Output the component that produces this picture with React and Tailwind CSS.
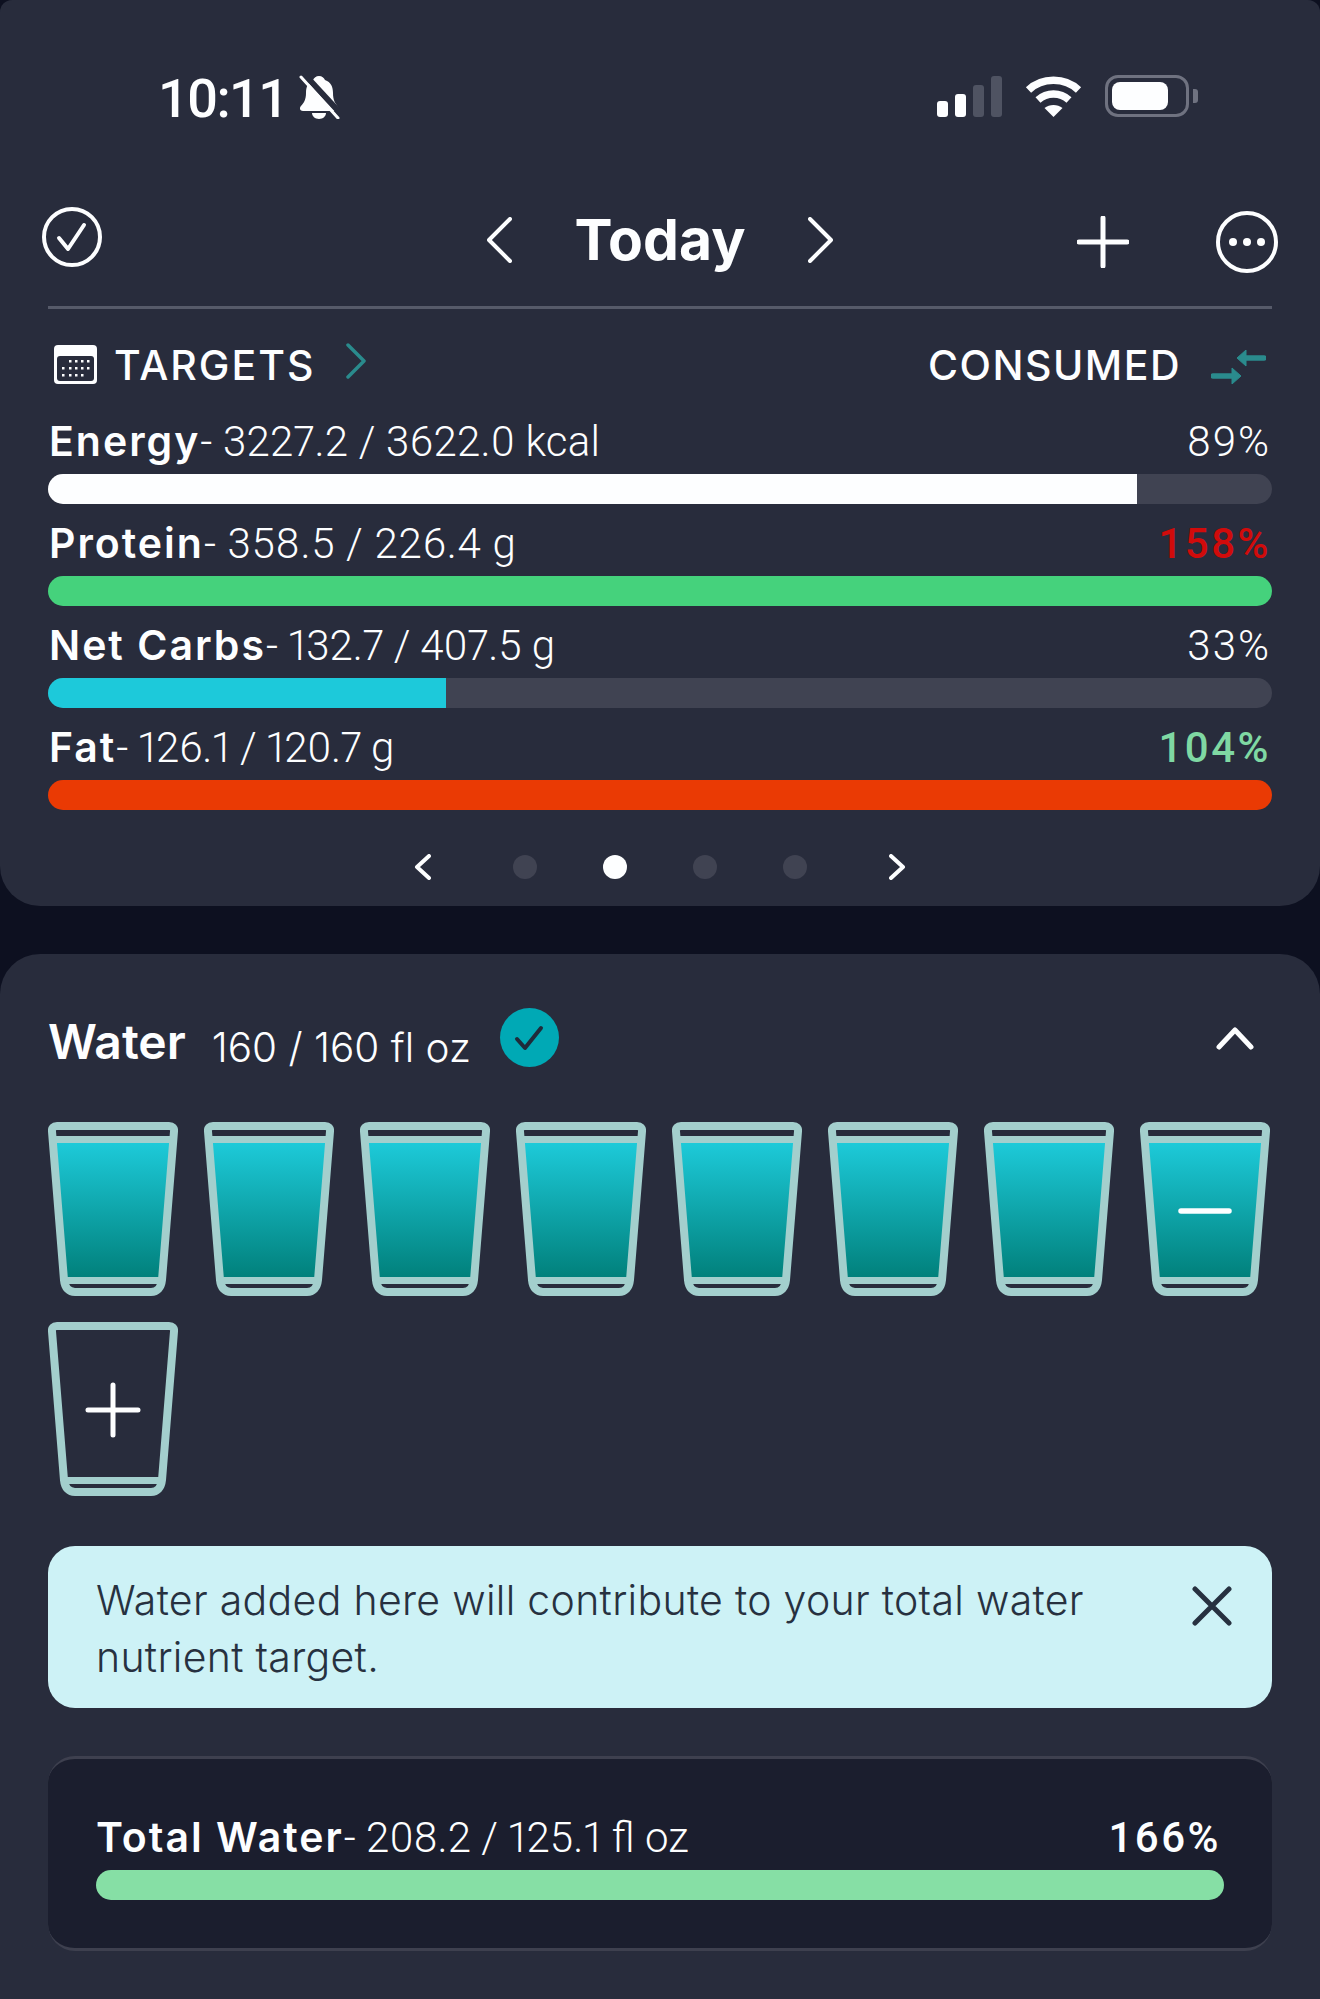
const rows = [
  { name: "Energy", value: "3227.2 / 3622.0 kcal", valueClass: "tracking-[0.2px]", pct: "89%", pctClass: "text-[#fdfeff] font-light tracking-[2px]", fill: "bg-[#fdfeff]", width: "w-[89%]" },
  { name: "Protein", value: "358.5 / 226.4 g", valueClass: "tracking-[0.7px]", pct: "158%", pctClass: "text-[#d10b0b] font-medium tracking-[2.5px]", fill: "bg-[#45d27c]", width: "w-full" },
  { name: "Net Carbs", value: "132.7 / 407.5 g", valueClass: "tracking-[-0.1px]", pct: "33%", pctClass: "text-[#fdfeff] font-light tracking-[2px]", fill: "bg-[#1dc9da]", width: "w-[32.5%]" },
  { name: "Fat", value: "126.1 / 120.7 g", valueClass: "tracking-[-0.35px]", pct: "104%", pctClass: "text-[#7fd8a3] font-medium tracking-[2.5px]", fill: "bg-[#ea3a04]", width: "w-full" },
];

const BellSlash = () => (
  <svg width="41" height="44" viewBox="0 0 41 44">
    <path d="M20 1c3 0 5 2 6 4 6 2 8 7 8 13 0 7 2 10 5 14 1 2 0 4-2 4H4c-3 0-4-3-2-5 3-3 5-7 5-13 0-6 2-11 7-13 1-2 3-4 6-4z" fill="#fdfeff" />
    <path d="M13 38h14c0 3-3 6-7 6s-7-3-7-6z" fill="#fdfeff" />
    <path d="M5 -1l38 41" stroke="#282c3c" strokeWidth="6" />
    <path d="M2 2l37 41" stroke="#fdfeff" strokeWidth="3" strokeLinecap="round" />
  </svg>
);

const Wifi = () => (
  <svg width="57" height="42" viewBox="0 0 57 42" fill="none">
    <path d="M3.500 15C17 2 40 2 53.500 15" stroke="#fdfeff" strokeWidth="7.500" />
    <path d="M13 25c9-8 22-8 31 0" stroke="#fdfeff" strokeWidth="7.500" />
    <path d="M19.500 33c5-4 13-4 18 0l-9 9z" fill="#fdfeff" />
  </svg>
);

const Chevron = ({ dir }) => (
  <svg width="25" height="46" viewBox="0 0 25 46" fill="none">
    <path
      d={dir === "left" ? "M23 2L2 23l21 21" : "M2 2l21 21L2 44"}
      stroke="#fdfeff"
      strokeWidth="4"
      strokeLinecap="round"
      strokeLinejoin="round"
    />
  </svg>
);

const SmallChevron = ({ dir }) => (
  <svg width="17" height="26" viewBox="0 0 17 26" fill="none">
    <path d={dir === "left" ? "M15 2L3 13l12 11" : "M2 2l12 11L2 24"} stroke="#fdfeff" strokeWidth="4" strokeLinecap="round" strokeLinejoin="round" />
  </svg>
);

const Calendar = () => (
  <svg width="43" height="39" viewBox="0 0 43 39">
    <rect width="43" height="39" rx="4" fill="#fdfeff" />
    <rect x="3" y="11" width="37" height="25" rx="3" fill="#282c3c" />
    {[
      [16, 16], [22, 16], [28, 16], [34, 16],
      [9, 23], [16, 23], [22, 23], [28, 23], [34, 23],
      [9, 30], [16, 30], [22, 30], [28, 30],
    ].map(([x, y]) => (
      <rect key={`${x}-${y}`} x={x - 1} y={y - 1} width="2.500" height="2.500" fill="#fdfeff" />
    ))}
  </svg>
);

const Swap = () => (
  <svg width="55" height="34" viewBox="0 0 55 34">
    <path d="M32 8h21M2 26h21" stroke="#2a8b8d" strokeWidth="5.500" strokeLinecap="round" />
    <path d="M26 8l9-8v16zM30 26l-9-8v16z" fill="#2a8b8d" stroke="#2a8b8d" strokeWidth="1" strokeLinejoin="round" />
  </svg>
);

const Glass = ({ filled, icon }) => (
  <svg width="130" height="174" viewBox="0 0 130 174" fill="none">
    <defs>
      <linearGradient id="water" x1="0" y1="0" x2="0" y2="1">
        <stop offset="0" stopColor="#1dcad9" />
        <stop offset="1" stopColor="#01807b" />
      </linearGradient>
    </defs>
    {filled && <path d="M6 21h118l-10 135H16z" fill="url(#water)" />}
    {filled && <path d="M4 17.500h122" stroke="#a3cfcd" strokeWidth="7" />}
    <path d="M15 158.500h100" stroke="#a3cfcd" strokeWidth="7" />
    <path
      d="M9 4h112c3.500 0 5.500 2 5 5.500L114 158c-.8 8-5 12-11 12H27c-6 0-10.200-4-11-12L4 9.500C3.500 6 5.500 4 9 4z"
      stroke="#a3cfcd"
      strokeWidth="8"
    />
    {icon === "minus" && <path d="M41 89h48" stroke="#fdfeff" strokeWidth="5.500" strokeLinecap="round" />}
    {icon === "plus" && <path d="M40 88h50M65 63v50" stroke="#fdfeff" strokeWidth="5" strokeLinecap="round" />}
  </svg>
);

const App = () => {
  return (
    <div className="w-[1320px] h-[1999px] overflow-hidden bg-[#0d1020] font-['Inter',sans-serif] text-[#fdfeff]">
      {/* summary card */}
      <div className="h-[906px] bg-[#282c3c] rounded-t-[12px] rounded-b-[40px] pt-[75px]">
        <div className="flex justify-between items-start h-[44px] pl-[158px] pr-[122px]">
          <div className="flex items-start gap-[11px]">
            <span className="mt-[2px] font-['Roboto',sans-serif] font-medium text-[54px] leading-[44px] tracking-[-1.500px]">10:11</span>
            <BellSlash />
          </div>
          <div className="flex items-start">
            <div className="flex items-end gap-[7px] h-[41px] mt-[1px]">
              <div className="w-[11px] h-[16px] rounded-[3px] bg-[#fdfeff]" />
              <div className="w-[11px] h-[23px] rounded-[3px] bg-[#fdfeff]" />
              <div className="w-[11px] h-[32px] rounded-[3px] bg-[#4f5362]" />
              <div className="w-[11px] h-[41px] rounded-[3px] bg-[#4f5362]" />
            </div>
            <div className="ml-[23px]">
              <Wifi />
            </div>
            <div className="ml-[23px] w-[84px] h-[42px] rounded-[13px] border-[3px] border-[#6f7280] p-[4px]">
              <div className="w-[56px] h-full rounded-[8px] bg-[#fdfeff]" />
            </div>
            <div className="ml-[4px] mt-[14px] w-[5px] h-[14px] rounded-r-[3px] bg-[#6f7280]" />
          </div>
        </div>

        <div className="grid grid-cols-[1fr_auto_1fr] items-center h-[70px] mt-[86px] px-[42px]">
          <svg width="60" height="60" viewBox="0 0 60 60" fill="none" className="-mt-[6px]">
            <circle cx="30" cy="30" r="28" stroke="#fdfeff" strokeWidth="4" />
            <path d="M17 31l9 11L42 18" stroke="#fdfeff" strokeWidth="4" strokeLinecap="round" strokeLinejoin="round" />
          </svg>
          <div className="flex items-center gap-[63px]">
            <Chevron dir="left" />
            <span className="font-bold text-[57px] leading-[70px]">Today</span>
            <Chevron dir="right" />
          </div>
          <div className="flex items-center justify-end gap-[87px] pt-[3px]">
            <svg width="52" height="52" viewBox="0 0 52 52" fill="none">
              <path d="M2 26h48M26 2v48" stroke="#fdfeff" strokeWidth="5" strokeLinecap="round" />
            </svg>
            <svg width="62" height="62" viewBox="0 0 62 62" fill="none">
              <circle cx="31" cy="31" r="29" stroke="#fdfeff" strokeWidth="4" />
              <circle cx="17" cy="31" r="4" fill="#fdfeff" />
              <circle cx="31" cy="31" r="4" fill="#fdfeff" />
              <circle cx="45" cy="31" r="4" fill="#fdfeff" />
            </svg>
          </div>
        </div>

        <div className="mx-[48px] mt-[31px] h-[3px] bg-[#565a69]" />

        <div className="flex justify-between items-center mx-[48px] mt-[33px] h-[44px]">
          <div className="flex items-center">
            <div className="ml-[6px]">
              <Calendar />
            </div>
            <span className="ml-[17px] mt-[2px] font-medium text-[41px] leading-[44px] tracking-[2px]">TARGETS</span>
            <svg width="20" height="36" viewBox="0 0 20 36" fill="none" className="ml-[31px] -mt-[6px]">
              <path d="M2 2l16 16L2 34" stroke="#2a8b8d" strokeWidth="3.500" strokeLinecap="round" strokeLinejoin="round" />
            </svg>
          </div>
          <div className="flex items-center">
            <span className="mt-[2px] font-medium text-[41px] leading-[44px] tracking-[1.5px]">CONSUMED</span>
            <div className="ml-[30px] mr-[6px] mt-[6px]">
              <Swap />
            </div>
          </div>
        </div>

        <div className="mx-[48px] mt-[16px]">
          {rows.map((row) => (
            <div key={row.name}>
              <div className="flex justify-between items-end h-[72px] pb-[7px] pr-[1px] pl-[1px] font-['Roboto',sans-serif] text-[42px] leading-[50px]">
                <div>
                  <span className="font-['Inter',sans-serif] font-semibold text-[41px] tracking-[2px]">{row.name}</span>
                  <span className={`font-light proportional-nums ${row.valueClass}`}>- {row.value}</span>
                </div>
                <span className={row.pctClass}>{row.pct}</span>
              </div>
              <div className="h-[30px] rounded-full overflow-hidden bg-[#404352]">
                <div className={`h-full ${row.fill} ${row.width}`} />
              </div>
            </div>
          ))}
        </div>

        <div className="flex items-center justify-center h-[26px] mt-[44px]">
          <SmallChevron dir="left" />
          <div className="ml-[82px] w-[24px] h-[24px] rounded-full bg-[#404352]" />
          <div className="ml-[66px] w-[24px] h-[24px] rounded-full bg-[#fdfeff]" />
          <div className="ml-[66px] w-[24px] h-[24px] rounded-full bg-[#404352]" />
          <div className="ml-[66px] w-[24px] h-[24px] rounded-full bg-[#404352]" />
          <div className="ml-[82px]">
            <SmallChevron dir="right" />
          </div>
        </div>
      </div>

      {/* water card */}
      <div className="h-[1045px] mt-[48px] bg-[#282c3c] rounded-t-[40px] px-[48px] pt-[55px]">
        <div className="flex items-center justify-between h-[60px]">
          <div className="flex items-center h-[60px]">
            <span className="mt-[6px] font-semibold text-[48px] leading-[54px]">Water</span>
            <span className="ml-[26px] mt-[18px] font-light text-[40.500px] leading-[46px]">160 / 160 fl oz</span>
            <div className="ml-[29px] -mt-[3px] w-[59px] h-[59px] rounded-full bg-[#00a9b5] flex items-center justify-center">
              <svg width="30" height="26" viewBox="0 0 30 26" fill="none">
                <path d="M3 14l8 9L27 3" stroke="#1f2b3a" strokeWidth="4" strokeLinecap="round" strokeLinejoin="round" />
              </svg>
            </div>
          </div>
          <svg width="38" height="24" viewBox="0 0 38 24" fill="none" className="mr-[18px] -mt-[2px]">
            <path d="M3 21L19 4l16 17" stroke="#fdfeff" strokeWidth="5" strokeLinecap="round" strokeLinejoin="round" />
          </svg>
        </div>

        <div className="flex flex-wrap gap-[26px] pt-[53px]">
          {[0, 1, 2, 3, 4, 5, 6].map((i) => (
            <Glass key={i} filled />
          ))}
          <Glass filled icon="minus" />
          <Glass icon="plus" />
        </div>

        <div className="flex justify-between items-start h-[162px] mt-[50px] rounded-[27px] bg-[#cdf2f6] pl-[48px] pr-[40px] pt-[26px]">
          <p className="w-[1040px] font-light text-[#273140] text-[41px] leading-[57px] tracking-[0.3px]">
            Water added here will contribute to your total water nutrient target.
          </p>
          <svg width="40" height="40" viewBox="0 0 40 40" fill="none" className="mt-[14px]">
            <path d="M3 3l34 34M37 3L3 37" stroke="#273140" strokeWidth="5" strokeLinecap="round" />
          </svg>
        </div>

        <div className="h-[195px] mt-[48px] rounded-[27px] border-y-[3px] border-[#3e404f] bg-[#1b1e2e] px-[48px] pt-[56px]">
          <div className="flex justify-between items-end h-[55px] pb-[7px] pr-[3px] font-['Roboto',sans-serif] text-[42px] leading-[50px]">
            <div>
              <span className="font-['Inter',sans-serif] font-semibold text-[41px] tracking-[2px]">Total Water</span>
              <span className="font-light tracking-[0px] proportional-nums">- 208.2 / 125.1 fl oz</span>
            </div>
            <span className="font-medium tracking-[2.5px]">166%</span>
          </div>
          <div className="h-[30px] rounded-full bg-[#86dfa5]" />
        </div>
      </div>
    </div>
  );
};

export default App;
